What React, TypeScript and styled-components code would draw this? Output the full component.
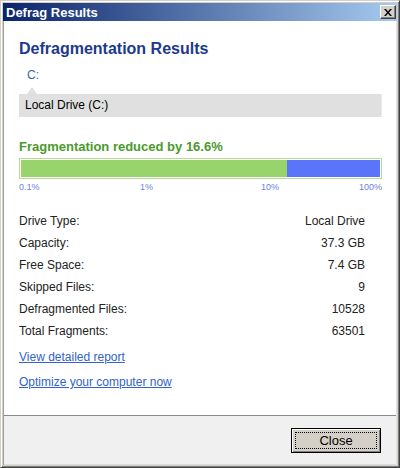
import styled, { createGlobalStyle } from 'styled-components';

const GlobalStyle = createGlobalStyle`
  html, body { margin: 0; padding: 0; background: #ffffff; }
  * { box-sizing: border-box; }
`;

const stats = [
  { label: 'Drive Type:', value: 'Local Drive' },
  { label: 'Capacity:', value: '37.3 GB' },
  { label: 'Free Space:', value: '7.4 GB' },
  { label: 'Skipped Files:', value: '9' },
  { label: 'Defragmented Files:', value: '10528' },
  { label: 'Total Fragments:', value: '63501' },
];

const reduced = 16.6;
// bar is on a log scale from 0.1% to 100%
const reducedPos = ((Math.log10(reduced) + 1) / 3) * 100;

const Window = styled.div`
  width: 400px;
  height: 468px;
  display: flex;
  flex-direction: column;
  background: #d4d0c8;
  border: 1px solid;
  border-color: #d4d0c8 #404040 #404040 #d4d0c8;
  box-shadow: inset 1px 1px #ffffff, inset -1px -1px #808080;
  padding: 2px;
  font-family: "Liberation Sans", Arial, sans-serif;
`;

const TitleBar = styled.div`
  height: 18px;
  flex-shrink: 0;
  display: flex;
  align-items: center;
  justify-content: space-between;
  padding: 0 1px 0 3px;
  background: linear-gradient(to right, #0a246a, #a6caf0);
  color: #ffffff;
  font-size: 13px;
  font-weight: bold;
`;

const TitleButton = styled.button`
  width: 16px;
  height: 14px;
  padding: 0;
  display: flex;
  align-items: center;
  justify-content: center;
  background: #d4d0c8;
  border: 1px solid;
  border-color: #ffffff #404040 #404040 #ffffff;
  box-shadow: inset -1px -1px #808080;
`;

const Panel = styled.div`
  flex: 1;
  display: flex;
  flex-direction: column;
  border-left: 1px solid #a0a0a0;
  border-right: 1px solid #e4e4e4;
  background: #ffffff;
`;

const Content = styled.div`
  flex: 1;
  padding: 18px 14px 0 15px;
`;

const Heading = styled.div`
  font-size: 16px;
  line-height: 20px;
  font-weight: bold;
  color: #1c3a8c;
`;

const DriveTab = styled.div`
  margin: 9px 0 0 8px;
  font-size: 12px;
  line-height: 14px;
  color: #3362b6;
`;

const TabArrow = styled.div`
  margin: 5px 0 0 8px;
  width: 0;
  height: 0;
  border-left: 5px solid transparent;
  border-right: 5px solid transparent;
  border-bottom: 7px solid #e0e0e0;
`;

const DriveBar = styled.div`
  height: 23px;
  line-height: 23px;
  padding-left: 6px;
  background: #e0e0e0;
  border-right: 1px solid #ececec;
  font-size: 12px;
  color: #000000;
`;

const Reduced = styled.div`
  margin-top: 22px;
  font-size: 13px;
  line-height: 16px;
  font-weight: bold;
  color: #4c9a2c;
`;

const Meter = styled.div`
  margin-top: 3px;
  height: 21px;
  padding: 1px;
  border: 1px solid #b6dc98;
  display: flex;
`;

const MeterFill = styled.div<{ $color: string }>`
  height: 100%;
  background: ${p => p.$color};
`;

const Scale = styled.div`
  margin-top: 3px;
  display: grid;
  grid-template-columns: 1fr 1fr 1fr;
  font-size: 9px;
  line-height: 11px;
  color: #6e80e2;
`;

const ScaleEnd = styled.div`
  display: flex;
  justify-content: space-between;
`;

const StatList = styled.div`
  margin-top: 17px;
  padding-right: 17px;
`;

const StatRow = styled.div`
  display: flex;
  justify-content: space-between;
  height: 22px;
  line-height: 22px;
  font-size: 12px;
  color: #222222;
`;

const Links = styled.div`
  margin-top: 3px;
`;

const Link = styled.a`
  display: block;
  width: fit-content;
  line-height: 25px;
  font-size: 12px;
  color: #3163c9;
  text-decoration: underline;
`;

const Footer = styled.div`
  height: 50px;
  flex-shrink: 0;
  display: flex;
  justify-content: flex-end;
  align-items: flex-start;
  padding: 12px 15px 0 0;
  border-top: 1px solid #8a8a8a;
  border-bottom: 1px solid #dcdcdc;
  background: #f0f0f0;
`;

const Button = styled.button`
  position: relative;
  width: 90px;
  height: 25px;
  padding: 0;
  border: 1px solid #000000;
  background: #d4d0c8;
  box-shadow: inset 1px 1px #ffffff, inset -1px -1px #808080;
  font-family: "Liberation Sans", Arial, sans-serif;
  font-size: 13px;
  color: #000000;

  &::after {
    content: '';
    position: absolute;
    inset: 3px;
    border: 1px dotted #000000;
  }
`;

function App() {
  return (
    <Window>
      <GlobalStyle />
      <TitleBar>
        <span>Defrag Results</span>
        <TitleButton aria-label="Close">
          <svg width="8" height="7" viewBox="0 0 8 7">
            <path d="M0 0h2l2 2.5L6 0h2L5 3.5 8 7H6L4 4.5 2 7H0l3-3.5z" fill="#000" />
          </svg>
        </TitleButton>
      </TitleBar>
      <Panel>
        <Content>
          <Heading>Defragmentation Results</Heading>
          <DriveTab>C:</DriveTab>
          <TabArrow />
          <DriveBar>Local Drive (C:)</DriveBar>
          <Reduced>Fragmentation reduced by {reduced}%</Reduced>
          <Meter>
            <MeterFill $color="#99d36c" style={{ width: `${reducedPos}%` }} />
            <MeterFill $color="#5a75fa" style={{ flex: 1 }} />
          </Meter>
          <Scale>
            <span>0.1%</span>
            <span>1%</span>
            <ScaleEnd>
              <span>10%</span>
              <span>100%</span>
            </ScaleEnd>
          </Scale>
          <StatList>
            {stats.map(s => (
              <StatRow key={s.label}>
                <span>{s.label}</span>
                <span>{s.value}</span>
              </StatRow>
            ))}
          </StatList>
          <Links>
            <Link href="#">View detailed report</Link>
            <Link href="#">Optimize your computer now</Link>
          </Links>
        </Content>
        <Footer>
          <Button>Close</Button>
        </Footer>
      </Panel>
    </Window>
  );
}

export default App;
